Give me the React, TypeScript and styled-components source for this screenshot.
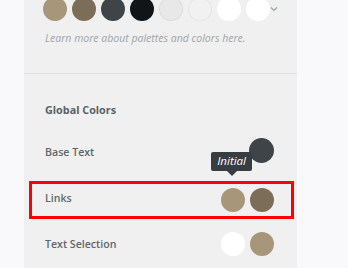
import React from 'react';
import styled, { createGlobalStyle } from 'styled-components';

const GlobalStyle = createGlobalStyle`
  html, body {
    margin: 0;
    padding: 0;
    background: #f9f9fc;
    overflow: hidden;
  }
  body {
    font-family: "Open Sans", "Noto Sans", sans-serif;
  }
`;

const Panel = styled.div`
  width: 273px;
  height: 268px;
  margin-left: 24px;
  background: #f0f0f0;
  overflow: hidden;
`;

const PaletteSection = styled.div`
  padding-left: 19px;
  margin-top: -3px;
  height: 77px;
  border-bottom: 1px solid #dfe1e2;
  box-sizing: border-box;
`;

const SwatchRow = styled.div`
  display: flex;
  align-items: center;
  gap: 5px;
`;

const Swatch = styled.span<{ $color: string; $ring?: boolean }>`
  width: 24px;
  height: 24px;
  border-radius: 50%;
  background: ${(p) => p.$color};
  box-shadow: ${(p) => (p.$ring ? 'inset 0 0 0 1px rgba(0,0,0,0.05)' : 'none')};
  flex-shrink: 0;
`;

const Chevron = styled.svg`
  margin-left: -6px;
  margin-top: -1px;
`;

const HelpText = styled.p`
  margin: 9px 0 0 2px;
  font-size: 10.5px;
  font-style: italic;
  color: #9fa4a9;
  line-height: 16px;
`;

const GlobalSection = styled.div`
  padding-top: 28px;
`;

const Heading = styled.div`
  font-size: 10.8px;
  font-weight: 700;
  color: #5a6168;
  padding-left: 21px;
  line-height: 16px;
  margin-bottom: 11px;
`;

const Row = styled.div<{ $highlight?: boolean }>`
  position: relative;
  display: flex;
  align-items: center;
  justify-content: space-between;
  box-sizing: border-box;
  height: ${(p) => (p.$highlight ? '38px' : '46px')};
  margin: ${(p) => (p.$highlight ? '6px 3px 2px 5px' : '0 3px 0 5px')};
  padding: 0 17px 0 13px;
  border: 3px solid ${(p) => (p.$highlight ? '#ff0000' : 'transparent')};
`;

const Label = styled.span<{ $lift?: boolean }>`
  font-size: 10.6px;
  font-weight: 600;
  color: #5f666c;
  margin-bottom: ${(p) => (p.$lift ? '4px' : '0')};
`;

const Pair = styled.div`
  display: flex;
  gap: 5px;
`;

const BaseDot = styled(Swatch)`
  width: 25px;
  height: 25px;
  margin-bottom: 4px;
`;

const Tooltip = styled.div`
  position: absolute;
  right: 39px;
  top: 20px;
  background: #383d41;
  color: #fff;
  font-size: 11.5px;
  font-style: italic;
  padding: 2px 6px 3px;
  border-radius: 2px;
  line-height: 14px;
  &::after {
    content: '';
    position: absolute;
    left: 50%;
    bottom: -5px;
    margin-left: -5px;
    border-left: 5px solid transparent;
    border-right: 5px solid transparent;
    border-top: 5px solid #383d41;
  }
`;

const palette = ['#a79679', '#7c6d58', '#3e4448', '#121517', '#e8e8e8', '#f1f1f1', '#ffffff', '#ffffff'];

const App: React.FC = () => {
  return (
    <>
      <GlobalStyle />
      <Panel>
        <PaletteSection>
          <SwatchRow>
            {palette.map((c, i) => (
              <Swatch key={i} $color={c} $ring={i === 4 || i === 5} />
            ))}
            <Chevron width="10" height="8" viewBox="0 0 10 8">
              <path d="M2 2.5 L5 5.5 L8 2.5" fill="none" stroke="#9aa0a6" strokeWidth="1.2" />
            </Chevron>
          </SwatchRow>
          <HelpText>Learn more about palettes and colors here.</HelpText>
        </PaletteSection>
        <GlobalSection>
          <Heading>Global Colors</Heading>
          <Row>
            <Label>Base Text</Label>
            <Pair>
              <BaseDot $color="#3e4448" />
            </Pair>
            <Tooltip>Initial</Tooltip>
          </Row>
          <Row $highlight>
            <Label $lift>Links</Label>
            <Pair>
              <Swatch $color="#a79679" />
              <Swatch $color="#7c6d58" />
            </Pair>
          </Row>
          <Row>
            <Label>Text Selection</Label>
            <Pair>
              <Swatch $color="#ffffff" />
              <Swatch $color="#a79679" />
            </Pair>
          </Row>
        </GlobalSection>
      </Panel>
    </>
  );
};

export default App;
